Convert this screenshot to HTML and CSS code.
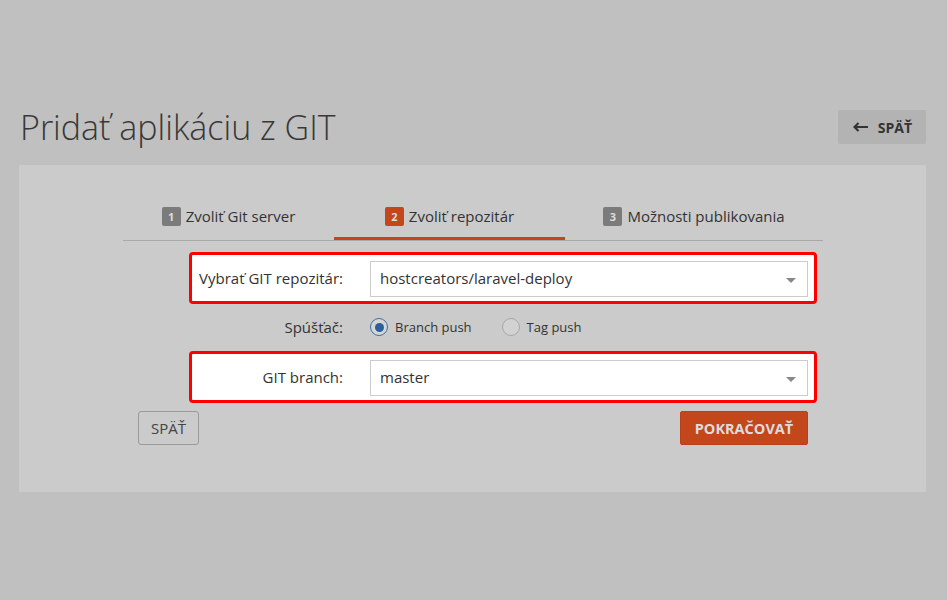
FILE: index.html
```html
<!DOCTYPE html>
<html lang="sk">
<head>
<meta charset="utf-8">
<title>Pridať aplikáciu z GIT</title>
<link rel="stylesheet" href="styles.css">
</head>
<body>
<div class="page">
  <header class="header">
    <h1 class="title">Pridať aplikáciu z GIT</h1>
    <button class="back-btn"><svg class="arrow" width="15" height="10" viewBox="0 0 15 10"><path d="M1.5 5 H15 M5.5 1 L1.5 5 L5.5 9" fill="none" stroke="#333" stroke-width="2.2"/></svg>SPÄŤ</button>
  </header>
  <section class="panel">
    <nav class="tabs">
      <div class="tab tab-1"><span class="badge">1</span>Zvoliť Git server</div>
      <div class="tab tab-2 active"><span class="badge">2</span>Zvoliť repozitár</div>
      <div class="tab tab-3"><span class="badge">3</span>Možnosti publikovania</div>
    </nav>
    <form class="form">
      <div class="row hl">
        <label class="row-label">Vybrať GIT repozitár:</label>
        <div class="select"><span>hostcreators/laravel-deploy</span><span class="caret"></span></div>
      </div>
      <div class="row radio-row">
        <label class="row-label">Spúšťač:</label>
        <div class="radios">
          <span class="radio checked"></span><span class="radio-text">Branch push</span>
          <span class="radio"></span><span class="radio-text">Tag push</span>
        </div>
      </div>
      <div class="row hl">
        <label class="row-label">GIT branch:</label>
        <div class="select"><span>master</span><span class="caret"></span></div>
      </div>
      <div class="actions">
        <button type="button" class="btn-outline">SPÄŤ</button>
        <button type="button" class="btn-primary">POKRAČOVAŤ</button>
      </div>
    </form>
  </section>
</div>
</body>
</html>
```
FILE: styles.css
```css
* { box-sizing: border-box; }
html, body { margin: 0; padding: 0; }
body {
  background: #c0c0c0;
  font-family: "Open Sans", "Liberation Sans", sans-serif;
  color: #333;
  width: 947px;
  height: 600px;
  overflow: hidden;
}
.page { padding: 110px 21px 0 19px; }
.header {
  display: flex;
  align-items: center;
  justify-content: space-between;
  height: 34px;
  padding-left: 1px;
}
.title {
  margin: 0;
  font-size: 34px;
  font-weight: 300;
  line-height: 34px;
  color: #383838;
}
.back-btn {
  height: 34px;
  width: 88px;
  border: 0;
  border-radius: 2px;
  background: #b3b3b3;
  font-family: inherit;
  font-size: 14px;
  font-weight: 700;
  color: #333;
  padding: 0 0 0 1px;
  display: flex;
  align-items: center;
  justify-content: center;
}
.back-btn .arrow { margin-right: 10px; }
.panel {
  margin-top: 21px;
  height: 327px;
  background: #cbcbcb;
  padding-top: 32px;
}
.tabs {
  display: flex;
  width: 700px;
  margin-left: 104px;
  border-bottom: 1px solid #a9a9a9;
}
.tab {
  display: flex;
  align-items: center;
  justify-content: center;
  height: 43px;
  padding-bottom: 2px;
  border-bottom: 3px solid transparent;
  font-size: 15px;
  color: #333;
}
.tab-1 { width: 211px; }
.tab-2 { width: 231px; }
.tab-3 { width: 258px; }
.tab.active { border-bottom-color: #c4461b; }
.badge {
  display: inline-flex;
  align-items: center;
  justify-content: center;
  width: 19px;
  height: 19px;
  border-radius: 2px;
  background: #7b7b7b;
  color: #ddd;
  font-size: 11px;
  font-weight: 700;
  margin-right: 5px;
}
.tab.active .badge { background: #c4461b; }
.form {
  width: 670px;
  margin: 11px 0 0 119px;
}
.row {
  display: flex;
  align-items: center;
}
.row-label {
  width: 232px;
  padding-right: 27px;
  text-align: right;
  font-size: 15px;
  color: #333;
  flex: none;
}
.row.hl {
  margin-left: 51px;
  margin-right: -9px;
  border: 3px solid #ff0000;
  border-radius: 4px;
  background: #fff;
  padding: 6px 6px 4px 0;
}
.row.hl .row-label { width: 178px; padding-bottom: 2px; }
.select {
  flex: 1;
  height: 36px;
  border: 1px solid #cccccc;
  background: #fff;
  display: flex;
  align-items: center;
  justify-content: space-between;
  padding: 0 11px 2px 9px;
  font-size: 15px;
  color: #333;
}
.caret {
  width: 0;
  height: 0;
  border-left: 5px solid transparent;
  border-right: 5px solid transparent;
  border-top: 5px solid #888;
  margin-top: 4px;
}
.radio-row { height: 47px; padding-bottom: 1px; }
.radios { display: flex; align-items: center; }
.radio {
  width: 18px;
  height: 18px;
  border-radius: 50%;
  border: 1px solid #a8a8a8;
  background: #d2d2d2;
  display: inline-flex;
  align-items: center;
  justify-content: center;
  margin-right: 7px;
}
.radio.checked { border-color: #3d6fa6; background: #d6d6d6; }
.radio.checked::after {
  content: "";
  width: 9px;
  height: 9px;
  border-radius: 50%;
  background: #2d5f9a;
}
.radio-text { font-size: 13px; color: #333; margin-right: 30px; }
.actions {
  display: flex;
  justify-content: space-between;
  margin-top: 8px;
}
.btn-outline {
  height: 34px;
  width: 61px;
  border: 1px solid #9a9a9a;
  border-radius: 3px;
  background: transparent;
  font-family: inherit;
  font-size: 15px;
  color: #444;
  padding: 0;
}
.btn-primary {
  height: 34px;
  width: 128px;
  border: 1px solid #b8411a;
  border-radius: 2px;
  background: #c4471c;
  font-family: inherit;
  font-size: 14.5px;
  font-weight: 700;
  color: #dcdcdc;
  padding: 0;
}
```
